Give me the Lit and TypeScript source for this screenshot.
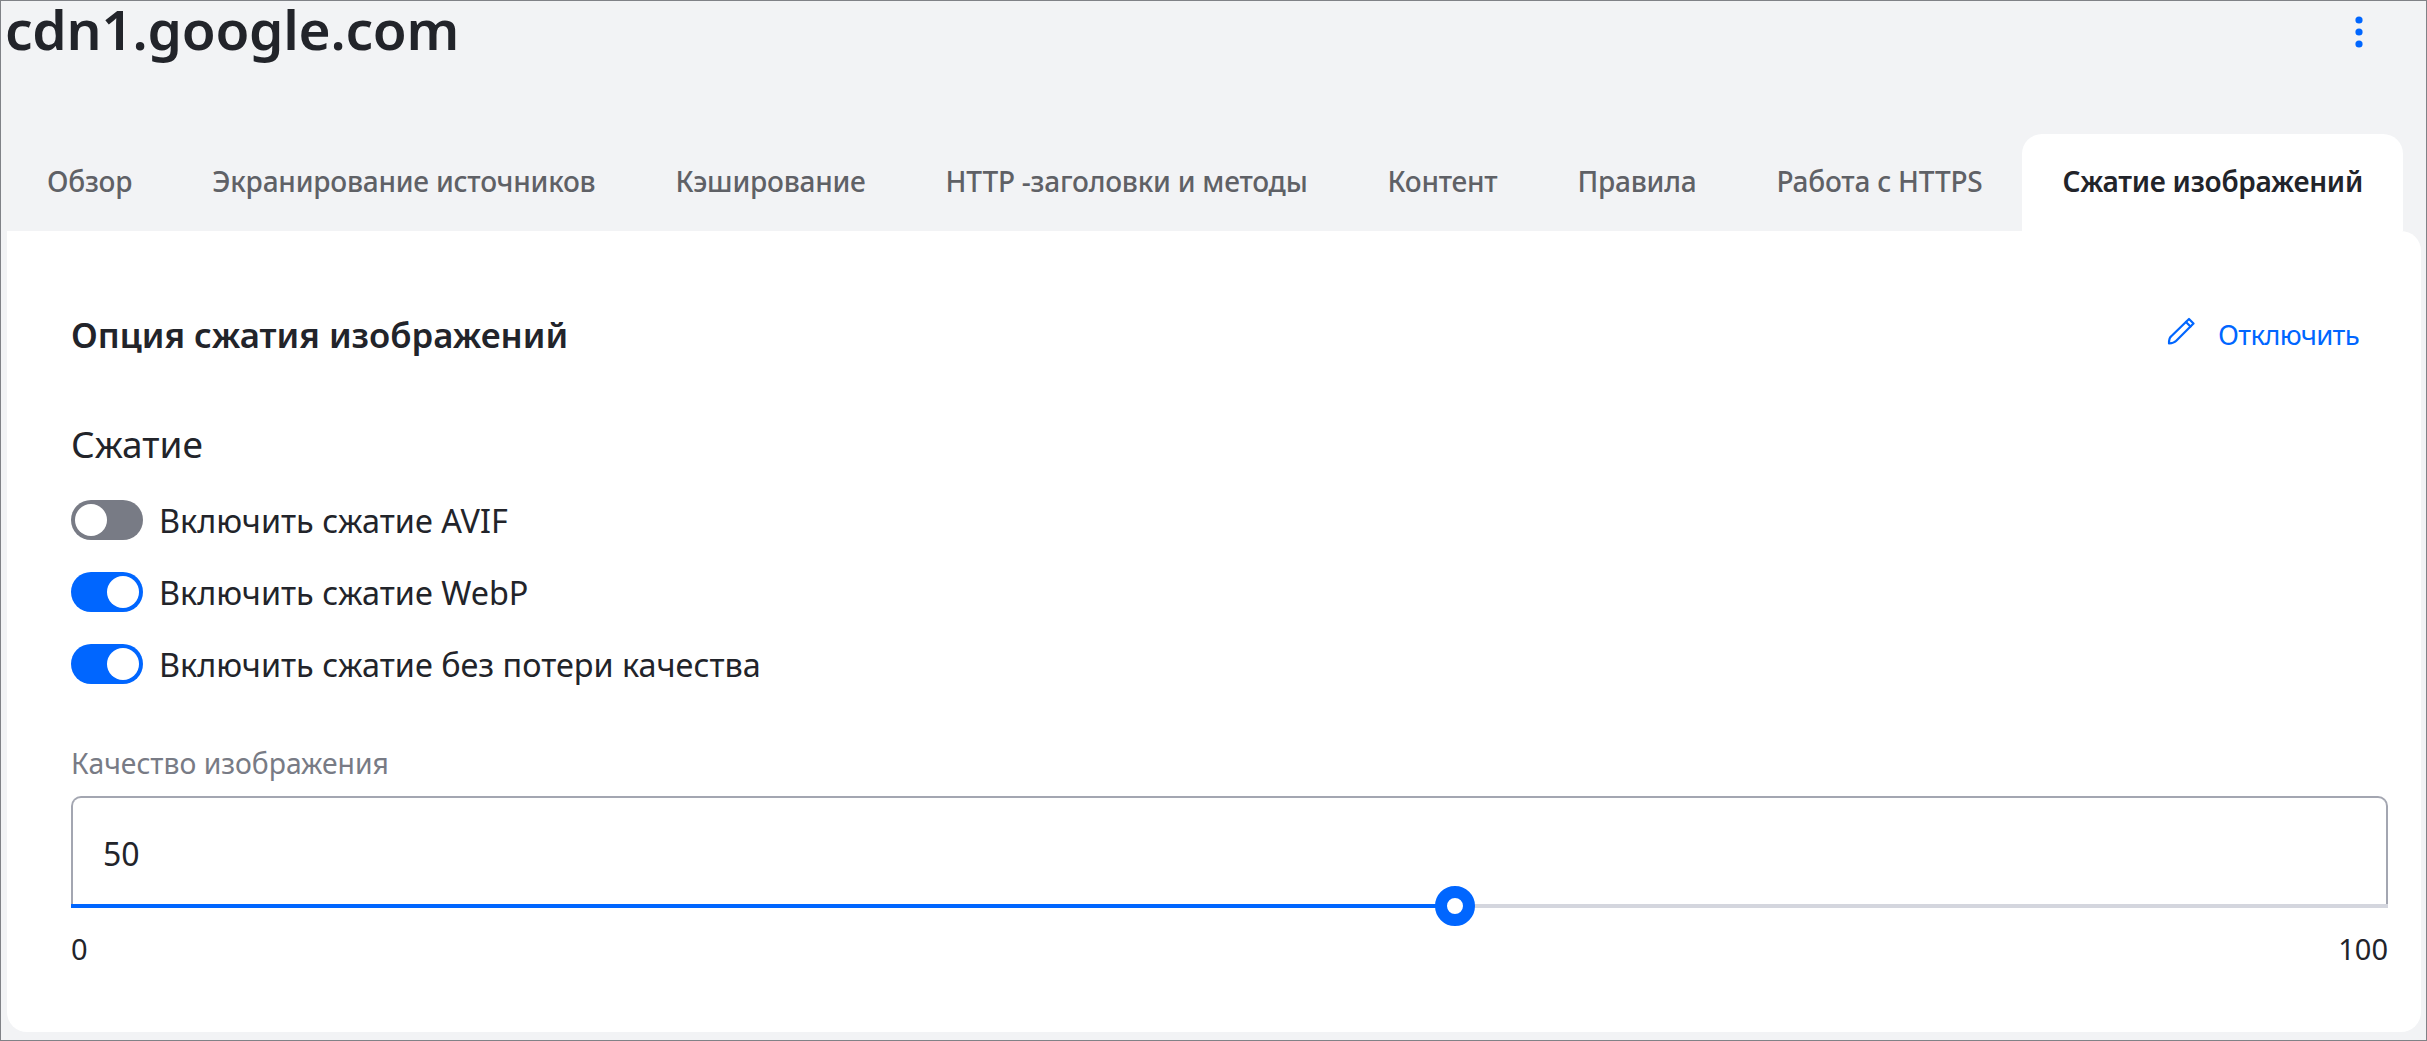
import { LitElement, html, css } from "lit";
import { customElement } from "lit/decorators.js";

const TABS = [
  "Обзор",
  "Экранирование источников",
  "Кэширование",
  "HTTP -заголовки и методы",
  "Контент",
  "Правила",
  "Работа с HTTPS",
  "Сжатие изображений",
];
const TOGGLES = [
  { label: "Включить сжатие AVIF", on: false },
  { label: "Включить сжатие WebP", on: true },
  { label: "Включить сжатие без потери качества", on: true },
];
const THUMB_PERCENT = 59.73;

@customElement("app-root")
export class AppRoot extends LitElement {
  static styles = css`
    :host {
      display: block;
      width: 2427px;
      height: 1041px;
      box-sizing: border-box;
      border: 1px solid #808287;
      background: #f2f3f5;
      font-family: "Noto Sans", sans-serif;
      color: #22242a;
      overflow: hidden;
    }
    .head {
      height: 133px;
      padding: 0 63px 0 4px;
      display: flex;
      justify-content: space-between;
      align-items: flex-start;
    }
    h1 {
      margin: 0;
      font-size: 55px;
      line-height: 55px;
      font-weight: 600;
      letter-spacing: -0.25px;
    }
    .dots {
      margin-top: 15px;
      display: block;
    }
    .tabs {
      display: flex;
      height: 97px;
      padding-left: 6px;
    }
    .tab {
      padding: 0 40px 4px;
      display: flex;
      align-items: center;
      font-size: 28px;
      letter-spacing: -0.22px;
      font-weight: 500;
      color: #5f6166;
      white-space: nowrap;
      border-radius: 20px 20px 0 0;
    }
    .tab.active {
      background: #fff;
      color: #22242a;
      font-weight: 600;
      letter-spacing: -0.25px;
    }
    .card {
      margin: 0 5px 0 6px;
      height: 801px;
      box-sizing: border-box;
      background: #fff;
      border-radius: 0 20px 20px 20px;
      padding: 78px 33px 0 64px;
    }
    .title-row {
      display: flex;
      justify-content: space-between;
      align-items: center;
      height: 50px;
      padding-right: 29px;
    }
    h2 {
      margin: 0;
      font-size: 34.7px;
      font-weight: 600;
    }
    .link {
      display: flex;
      align-items: center;
      gap: 23px;
      color: #0066ff;
      font-size: 27.5px;
      letter-spacing: -0.7px;
    }
    .pencil {
      margin-top: -6px;
    }
    h3 {
      margin: 60px 0 0;
      font-size: 37px;
      line-height: 50px;
      font-weight: 400;
    }
    .toggles {
      margin-top: 31px;
      display: flex;
      flex-direction: column;
      gap: 32px;
    }
    .row {
      display: flex;
      align-items: center;
      gap: 16px;
      height: 40px;
      font-size: 32.4px;
    }
    .toggle {
      width: 72px;
      height: 40px;
      box-sizing: border-box;
      padding: 4px;
      border-radius: 20px;
      background: #787b85;
      display: flex;
    }
    .toggle.on {
      background: #0066ff;
      justify-content: flex-end;
    }
    .knob {
      width: 32px;
      height: 32px;
      border-radius: 50%;
      background: #fff;
    }
    .caption {
      margin-top: 60px;
      font-size: 28.3px;
      line-height: 38px;
      color: #787b85;
    }
    .field {
      position: relative;
      margin-top: 14px;
      height: 112px;
      box-sizing: border-box;
      border: 2px solid #a3a6b1;
      border-bottom: none;
      border-radius: 10px 10px 0 0;
      padding: 0 0 0 30px;
      display: flex;
      align-items: center;
      font-size: 32px;
    }
    .track {
      position: absolute;
      left: -2px;
      right: -2px;
      bottom: 0;
      height: 4px;
      background: #d4d6de;
    }
    .fill {
      height: 100%;
      background: #0066ff;
    }
    .thumb {
      position: absolute;
      top: -18px;
      width: 40px;
      height: 40px;
      margin-left: -20px;
      box-sizing: border-box;
      border: 12px solid #0066ff;
      border-radius: 50%;
      background: #fff;
    }
    .scale {
      display: flex;
      justify-content: space-between;
      margin-top: 22px;
      font-size: 29px;
      line-height: 38px;
    }
  `;

  render() {
    return html`
      <div class="head">
        <h1>cdn1.google.com</h1>
        <svg class="dots" width="8" height="32" viewBox="0 0 8 32" fill="#0066ff">
          <circle cx="4" cy="4" r="3.6"></circle>
          <circle cx="4" cy="16" r="3.6"></circle>
          <circle cx="4" cy="28" r="3.6"></circle>
        </svg>
      </div>
      <div class="tabs">
        ${TABS.map(
          (t, i) =>
            html`<div class="tab ${i === TABS.length - 1 ? "active" : ""}">${t}</div>`
        )}
      </div>
      <div class="card">
        <div class="title-row">
          <h2>Опция сжатия изображений</h2>
          <div class="link">
            <svg class="pencil" width="28" height="28" viewBox="0 0 28 28" fill="none" stroke="#0066ff" stroke-width="2.2" stroke-linejoin="round" stroke-linecap="round">
              <path d="M22 2 L26.5 6.5 L9 24 Q7 26 2 26.5 Q2 21 4 19.5 Z"></path>
              <path d="M19 5 L23.5 9.5"></path>
            </svg>
            <span>Отключить</span>
          </div>
        </div>
        <h3>Сжатие</h3>
        <div class="toggles">
          ${TOGGLES.map(
            (t) => html`<div class="row">
              <div class="toggle ${t.on ? "on" : ""}"><div class="knob"></div></div>
              <span>${t.label}</span>
            </div>`
          )}
        </div>
        <div class="caption">Качество изображения</div>
        <div class="field">
          50
          <div class="track">
            <div class="fill" style="width:${THUMB_PERCENT}%"></div>
            <div class="thumb" style="left:${THUMB_PERCENT}%"></div>
          </div>
        </div>
        <div class="scale"><span>0</span><span>100</span></div>
      </div>
    `;
  }
}
